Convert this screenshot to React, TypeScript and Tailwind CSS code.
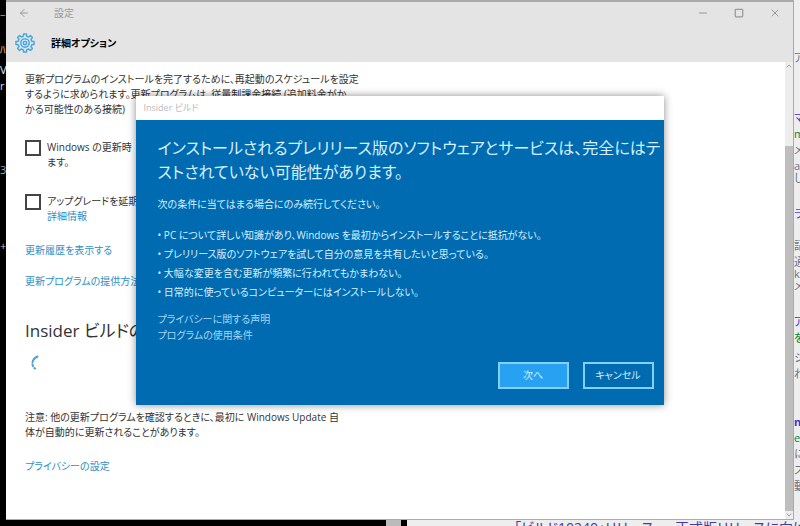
import { ArrowLeft, ChevronDown, ChevronUp, Minus, Square, X } from "lucide-react";

interface Snippet {
  text: string;
  className: string;
}

const conditions: string[] = [
  "PC について詳しい知識があり、Windows を最初からインストールすることに抵抗がない。",
  "プレリリース版のソフトウェアを試して自分の意見を共有したいと思っている。",
  "大幅な変更を含む更新が頻繁に行われてもかまわない。",
  "日常的に使っているコンピューターにはインストールしない。",
];

// text of the windows behind, cut off by the settings window
const leftSnippets: Snippet[] = [
  { text: "–", className: "mt-2 text-gray-400" },
  { text: "ﾊ", className: "mt-6 text-orange-300" },
  { text: "V", className: "mt-2 text-gray-200" },
  { text: "r", className: "mt-1 text-gray-300" },
  { text: "3:", className: "mt-18 text-gray-400" },
  { text: "+", className: "mt-16 text-red-300" },
];

const rightSnippets: Snippet[] = [
  { text: "ア", className: "mt-13 text-gray-500" },
  { text: "マ", className: "mt-12 text-indigo-700" },
  { text: "m", className: "mt-1 text-green-700" },
  { text: "メ", className: "mt-1 text-gray-500" },
  { text: "a", className: "mt-1 text-gray-500" },
  { text: "し", className: "text-gray-500" },
  { text: "ラ", className: "mt-6 text-indigo-600" },
  { text: "記", className: "mt-5 text-gray-500" },
  { text: "通", className: "mt-1 text-gray-500" },
  { text: "k", className: "text-gray-500" },
  { text: "メ", className: "text-gray-500" },
  { text: "ア", className: "mt-6 text-indigo-700" },
  { text: "を", className: "mt-1 text-green-700" },
  { text: "シ", className: "mt-2 text-gray-500" },
  { text: "わ", className: "mt-1 text-gray-500" },
  { text: "n", className: "mt-9 font-bold text-indigo-700" },
  { text: "e", className: "mt-1 text-green-700" },
  { text: "に", className: "mt-1 text-gray-500" },
  { text: "ス", className: "mt-1 text-gray-500" },
  { text: "動", className: "mt-1 text-gray-500" },
];

const gearPoints = (teeth: number, outer: number, inner: number) => {
  const points: string[] = [];
  const step = (Math.PI * 2) / teeth;
  for (let i = 0; i < teeth; i++) {
    const corners: [number, number][] = [[-0.31, inner], [-0.2, outer], [0.2, outer], [0.31, inner]];
    corners.forEach(([offset, radius]) => {
      const angle = (i + offset) * step;
      points.push(`${(12 + radius * Math.sin(angle)).toFixed(2)},${(12 - radius * Math.cos(angle)).toFixed(2)}`);
    });
  }
  return points.join(" ");
};

const GearIcon: React.FC = () => (
  <svg viewBox="0 0 24 24" className="size-5" fill="#cfe6f3" stroke="#4ba3d6" strokeWidth="1.7" strokeLinejoin="round" aria-hidden="true">
    <polygon points={gearPoints(8, 11, 8.4)} />
    <circle cx="12" cy="12" r="5" />
    <circle cx="12" cy="12" r="2" />
  </svg>
);

const Snippets: React.FC<{ items: Snippet[] }> = ({ items }) => (
  <>
    {items.map((item, index) => (
      <span key={index} className={`block text-[11px] leading-3 whitespace-nowrap ${item.className}`}>{item.text}</span>
    ))}
  </>
);

const TitleBar: React.FC = () => (
  <header className="h-15 shrink-0 bg-[#e4e4e4]">
    <div className="flex h-[22px] items-center px-3 text-[#999]">
      <button aria-label="戻る"><ArrowLeft size={12} strokeWidth={2} /></button>
      <span className="ml-6 text-[10px]">設定</span>
      <div className="ml-auto flex items-center gap-6">
        <button aria-label="最小化"><Minus size={12} strokeWidth={2} /></button>
        <button aria-label="最大化" className="flex w-3 justify-center"><Square size={10} strokeWidth={3} /></button>
        <button aria-label="閉じる"><X size={12} strokeWidth={2} /></button>
      </div>
    </div>
    <div className="flex h-[38px] items-center gap-4 pl-[9px]">
      <GearIcon />
      <h1 className="text-[10px] font-bold">詳細オプション</h1>
    </div>
  </header>
);

const ScrollBar: React.FC = () => (
  <div className="flex w-2 shrink-0 flex-col items-center bg-[#ededed] text-gray-500">
    <ChevronUp size={8} />
    <div className="mt-19 w-full flex-1 bg-[#bebebe]"></div>
    <ChevronDown size={8} />
  </div>
);

const Options: React.FC = () => (
  <main className="min-w-0 flex-1 px-[19px] pt-[10px] text-[10px] leading-[15px] text-[#333]">
    <p>
      更新プログラムのインストールを完了するために、再起動のスケジュールを設定<br />
      するように求められます。更新プログラムは、従量制課金接続 (追加料金がか<br />
      かる可能性のある接続)
    </p>
    <div className="mt-[23px] flex gap-[6px]">
      <input id="other" type="checkbox" className="size-4 shrink-0 appearance-none border-2 border-[#444] bg-white" />
      <label htmlFor="other">
        Windows の更新時<br />
        ます。
      </label>
    </div>
    <div className="mt-6 flex gap-[6px]">
      <input id="defer" type="checkbox" className="size-4 shrink-0 appearance-none border-2 border-[#444] bg-white" />
      <div>
        <label htmlFor="defer" className="block">アップグレードを延期</label>
        <a href="#" className="block text-[#2f8fc4]">詳細情報</a>
      </div>
    </div>
    <a href="#" className="mt-[19px] block text-[#2f8fc4]">更新履歴を表示する</a>
    <a href="#" className="mt-4 block text-[#2f8fc4]">更新プログラムの提供方法</a>
    <h2 className="mt-[30px] text-[17px] leading-6">Insider ビルドの</h2>
    <svg viewBox="0 0 20 20" className="mt-[10px] size-5" fill="none" stroke="#4ba3d6" strokeWidth="2" strokeLinecap="round" aria-hidden="true">
      <path d="M12.5 3.5Q8 5.500 7.500 9.500" />
      <path d="M7.500 11.500Q8 14.500 10 15.500" strokeDasharray="1.5 2.5" />
    </svg>
    <p className="mt-[37px]">
      注意: 他の更新プログラムを確認するときに、最初に Windows Update 自<br />
      体が自動的に更新されることがあります。
    </p>
    <a href="#" className="mt-[19px] inline-block text-[#2f8fc4]">プライバシーの設定</a>
  </main>
);

const InsiderDialog: React.FC = () => (
  <section role="dialog" aria-labelledby="dialog-title" className="w-full max-w-[528px] bg-[#006bb0] text-[10px] text-[#d5f0ff] shadow-[0_0_8px_rgba(0,0,0,0.45)]">
    <div className="h-6 bg-white pl-2 text-[9px] leading-6 text-[#bbb]">Insider ビルド</div>
    <div className="px-[22px] pt-4 pb-4">
      <h2 id="dialog-title" className="text-[16px] leading-6 whitespace-nowrap">
        インストールされるプレリリース版のソフトウェアとサービスは、完全にはテ<br />
        ストされていない可能性があります。
      </h2>
      <p className="mt-3 leading-4">次の条件に当てはまる場合にのみ続行してください。</p>
      <ul className="mt-[14px] leading-[19px]">
        {conditions.map((condition) => (
          <li key={condition}>• {condition}</li>
        ))}
      </ul>
      <div className="mt-[9px] leading-4 text-[#a5d8f5]">
        <a href="#" className="block">プライバシーに関する声明</a>
        <a href="#" className="block">プログラムの使用条件</a>
      </div>
      <div className="-mr-3 mt-[19px] flex justify-end gap-[14px]">
        <button className="h-[27px] w-[71px] border-2 border-[#85d0fa] bg-[#27a1f2]">次へ</button>
        <button className="h-[27px] w-[71px] border-2 border-[#85d0fa]">キャンセル</button>
      </div>
    </div>
  </section>
);

export default function App() {
  return (
    <div className="flex h-screen flex-col overflow-hidden bg-black font-['Open_Sans','Noto_Sans_CJK_JP',sans-serif] [font-feature-settings:'palt']">
      <div className="flex min-h-0 flex-1">
        <div className="w-[6px] shrink-0 overflow-hidden"><Snippets items={leftSnippets} /></div>
        <div className="relative flex min-w-0 flex-1 flex-col border-t-2 border-r border-b border-[#aaa] bg-white">
          <TitleBar />
          <div className="flex min-h-0 flex-1">
            <Options />
            <ScrollBar />
          </div>
          <div className="absolute inset-x-0 top-[94px] flex justify-center">
            <InsiderDialog />
          </div>
        </div>
        <div className="w-[6px] shrink-0 overflow-hidden bg-[#eee]"><Snippets items={rightSnippets} /></div>
      </div>
      <div className="flex h-[6px] shrink-0 overflow-hidden">
        <div className="flex flex-1 justify-end pr-[6px]"><div className="w-[15px] bg-[#bbb]"></div></div>
        <div className="w-[393px] bg-[#eee] pl-[107px] text-[14px] leading-4 whitespace-nowrap text-[#443aa8]">「ビルド10240」リリース ― 正式版リリースに向け</div>
      </div>
    </div>
  );
}
